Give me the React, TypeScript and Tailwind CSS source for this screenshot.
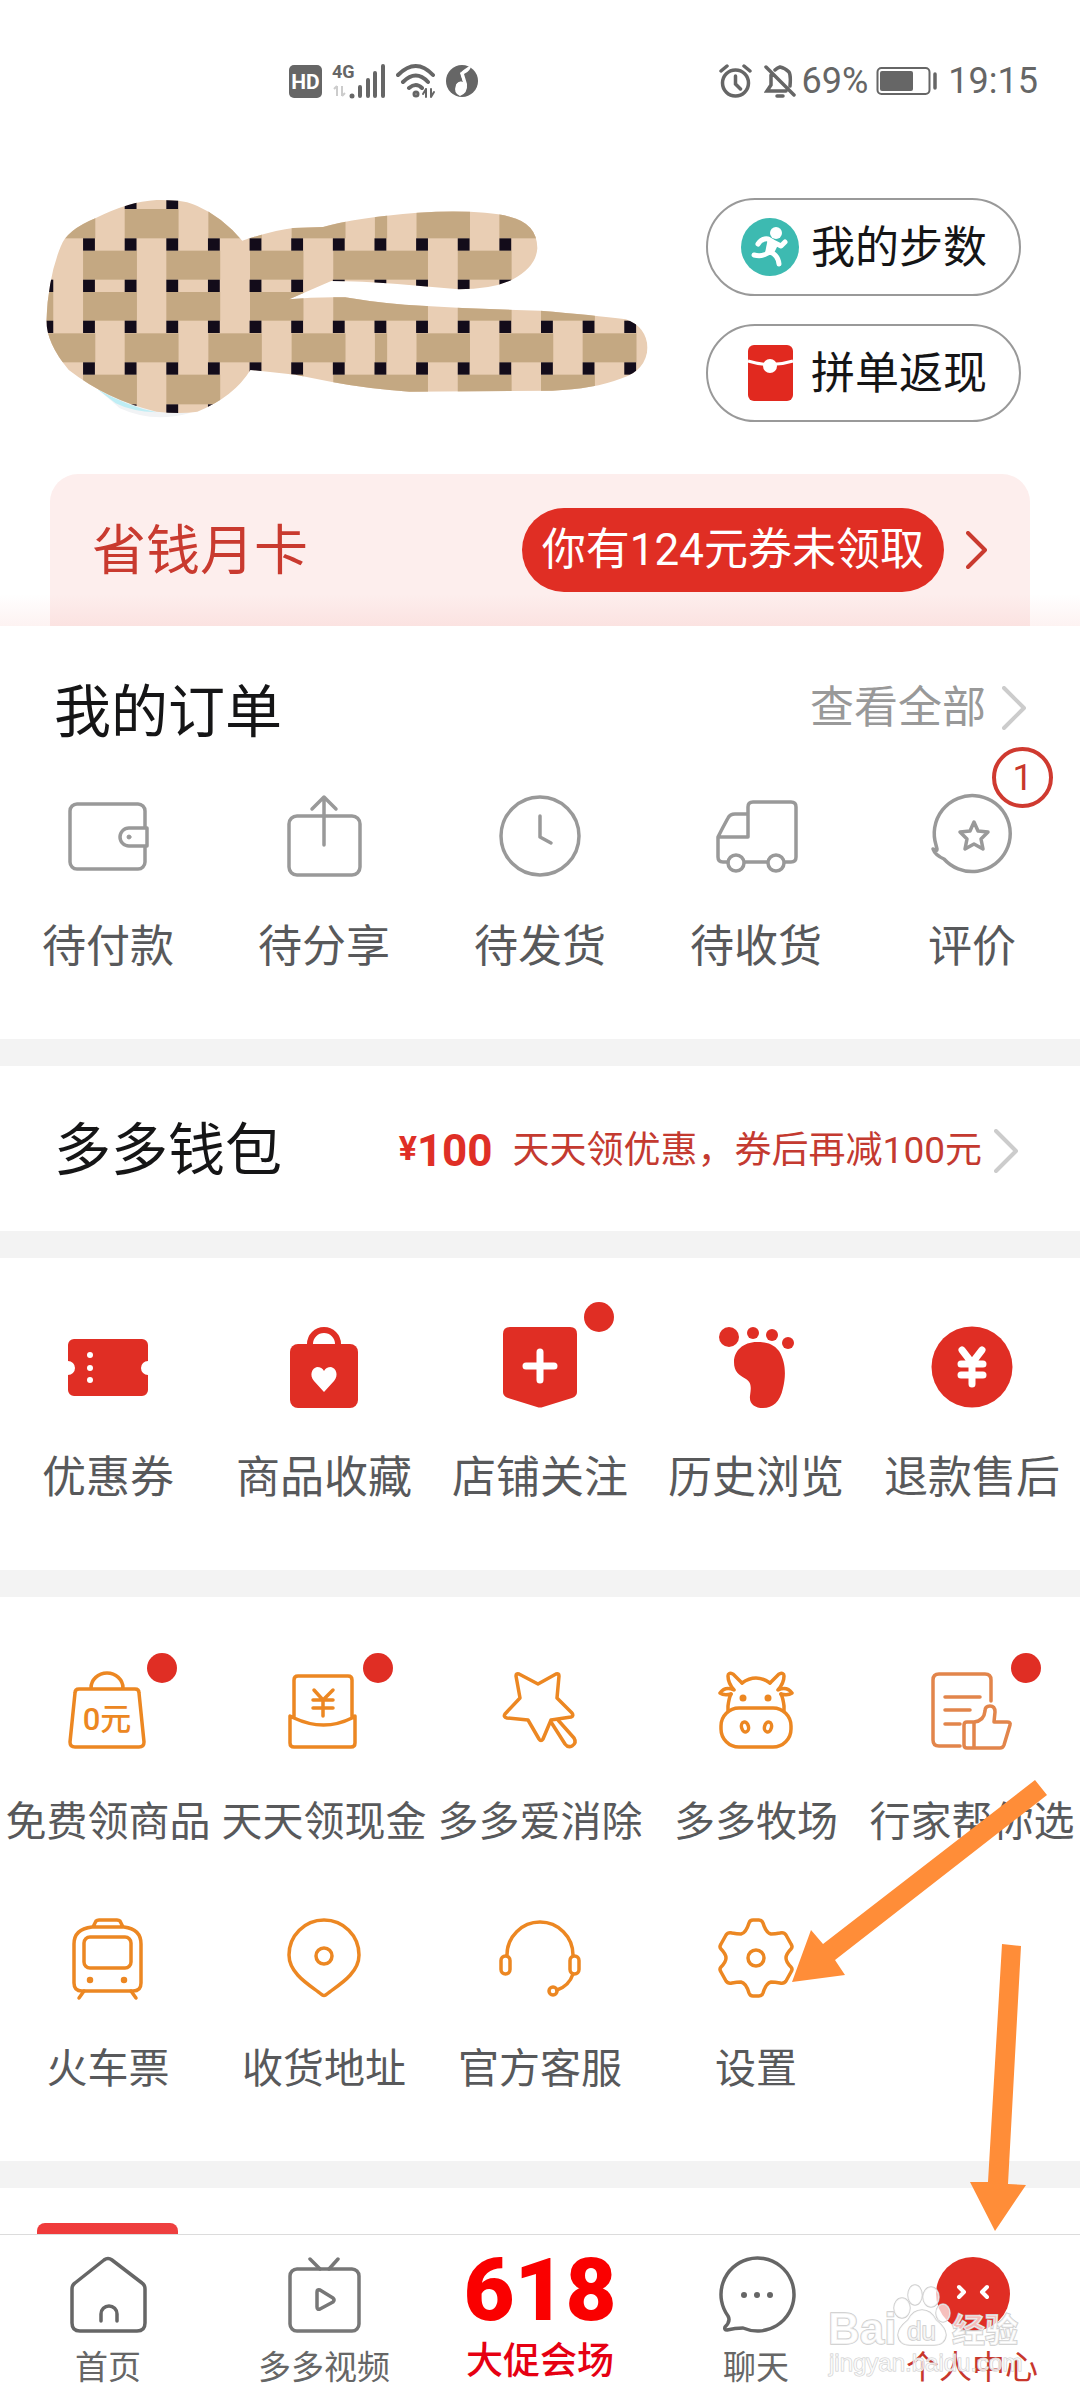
import React from "react";

const FONT = "font-[Roboto,'Noto_Sans_CJK_SC',sans-serif]";

/* ---------- drawing helpers ---------- */

function Icon({ children, color, width = 3.5 }: { children: React.ReactNode; color: string; width?: number }) {
  return (
    <svg
      viewBox="0 0 82 82"
      className="block size-[82px] overflow-visible"
      fill="none"
      stroke={color}
      strokeWidth={width}
      strokeLinecap="round"
      strokeLinejoin="round"
      aria-hidden="true"
    >
      {children}
    </svg>
  );
}

function Chevron({ className, height, strokeWidth = 4 }: { className: string; height: number; strokeWidth?: number }) {
  return (
    <svg width={height / 2 + 4} height={height + 4} viewBox={`-2 -2 ${height / 2 + 4} ${height + 4}`} fill="none" className={className} stroke="currentColor" strokeWidth={strokeWidth} strokeLinecap="round" strokeLinejoin="round" aria-hidden="true">
      <path d={`M0 0L${height / 2} ${height / 2}L0 ${height}`} />
    </svg>
  );
}

const GREY = "#999999";
const RED = "#e02e24";
const ORANGE = "#ec8722";
const NAV = "#666666";

/* ---------- avatar weave ---------- */

const blockX = Array.from({ length: 16 }, (_, i) => 28 + i * 102);
const blockY = [50, 175, 299, 422, 547, 673];
const even = [[130, 262], [334, 466], [539, 670], [743, 975], [1048, 1180], [1252, 1384]];
const odd = [[28, 160], [232, 364], [437, 568], [641, 773], [845, 875], [947, 1078], [1150, 1282], [1354, 1486]];
const bands: [number, number, number[][]][] = [
  [87, 88, odd],
  [212, 87, even],
  [336, 86, [[-70, 57], ...even]],
  [460, 87, odd],
  [584, 89, even],
];

function WovenPatch() {
  return (
    <svg width="640" height="224" viewBox="0 18 640 224" className="block shrink-0" role="img" aria-label="用户头像">
      <g transform="scale(0.40816 0.33333)">
        <clipPath id="patch">
          <path d="M520 182Q600 150 645 144L718 141Q800 112 950 98Q1100 88 1175 110Q1243 130 1243 205Q1240 262 1180 300Q1130 328 1050 328L900 312Q810 303 738 303L635 358Q700 350 772 352Q880 374 960 377Q1100 388 1250 392Q1380 405 1460 418Q1510 440 1513 503Q1510 570 1450 595Q1380 628 1280 632L930 635Q820 625 740 606L650 584L540 570Q500 650 410 695Q370 703 310 695Q190 660 95 570Q40 490 40 420Q45 290 75 200Q90 150 160 115Q240 65 310 60Q380 58 410 78Q470 110 520 182Z" />
        </clipPath>
        <path d="M160 620Q260 690 390 700Q300 730 220 685Z" fill="#f1f3f5" />
        <path d="M165 628Q240 680 310 697Q250 695 210 670Z" fill="#bfeef5" />
        <g clipPath="url(#patch)">
          <rect width="1568" height="750" fill="#e9ceb4" />
          {bands.map(([y, h, spans]) => spans.map(([a, b]) => <rect key={`${y}-${a}`} x={a} y={y} width={b - a} height={h} fill="#c4a882" />))}
          {blockY.map((y) => blockX.map((x) => <rect key={`${x}-${y}`} x={x} y={y} width="29" height="37" fill="#130c1a" />))}
        </g>
      </g>
    </svg>
  );
}

/* ---------- status bar ---------- */

function StatusBar() {
  return (
    <header className="flex h-[105px] items-end justify-between pl-[289px] pr-[42px] text-[#666]">
      <div className="flex h-12 items-center gap-[10px]">
        <svg width="33" height="34" viewBox="0 0 33 34" aria-label="HD">
          <rect width="33" height="33" y="1" rx="5" fill="#666" />
          <text x="16.500" y="25" textAnchor="middle" fontSize="21" fontWeight="700" fill="#fff" className="font-[Roboto]">HD</text>
        </svg>
        <svg width="54" height="36" viewBox="0 0 54 36" fill="#666" aria-label="4G">
          <text x="0" y="15" fontSize="18" fontWeight="700" className="font-[Roboto]">4G</text>
          <path d="M5 23v10M2 26l3-3M10 23v10M10 33l3-3" stroke="#ccc" strokeWidth="2" />
          <circle cx="20" cy="33" r="2.500" />
          <path d="M28 33v-9M36 33V17M43 33V10M51 33V3" stroke="#666" strokeWidth="4" strokeLinecap="round" />
        </svg>
        <svg width="40" height="36" viewBox="0 0 40 36" fill="none" stroke="#666" strokeWidth="4" strokeLinecap="round" aria-hidden="true">
          <path d="M2 12Q20 -6 37 12M7 19Q20 6 32 19M13 25Q20 19 26 25" />
          <circle cx="20" cy="31" r="1.500" />
          <path d="M30 26v8M30 26l-3 5M35 26v8M35 34l3-5" strokeWidth="2" />
        </svg>
        <svg width="32" height="32" viewBox="0 0 32 32" aria-hidden="true">
          <circle cx="16" cy="16" r="16" fill="#666" />
          <path d="M25 0Q25 6 18 9L21 19Q22 28 14 31Q7 28 10 20Q12 16 17 17L14 8Q17 5 25 0Z" fill="#fff" />
          <path d="M14 6L19 19Q20 28 14 30Q9 27 10 20Q13 15 17 17Z" fill="#fff" />
        </svg>
      </div>
      <div className="flex h-12 items-center">
        <svg width="33" height="34" viewBox="0 0 33 34" fill="none" stroke="#666" strokeWidth="3.500" strokeLinecap="round" aria-hidden="true">
          <circle cx="16.500" cy="19" r="13" />
          <path d="M16.500 12v8l5 5M2 7l6-5M31 7l-6-5" />
        </svg>
        <svg width="32" height="34" viewBox="0 0 32 34" fill="none" stroke="#666" strokeWidth="3.500" strokeLinecap="round" className="ml-3" aria-hidden="true">
          <path d="M2 3L30 31M7 11v10l-4 6h19M11 6q2-2 5-3q5 1 9 5q2 3 1 14M13 32h6" />
        </svg>
        <span className="ml-[6px] text-4xl">69%</span>
        <svg width="62" height="30" viewBox="0 0 62 30" className="ml-2" aria-hidden="true">
          <rect x="1.500" y="2" width="52" height="26" rx="4" fill="none" stroke="#666" strokeWidth="2" />
          <rect x="4" y="5" width="33" height="20" rx="2" fill="#666" />
          <path d="M59 8v14" stroke="#666" strokeWidth="3.500" strokeLinecap="round" />
        </svg>
        <span className="ml-[10px] text-4xl">19:15</span>
      </div>
    </header>
  );
}

/* ---------- grid entries ---------- */

type Entry = { label: string; icon: React.ReactNode; dot?: boolean; badge?: string };

function EntryGrid({ items, labelClass, dotClass = "" }: { items: Entry[]; labelClass: string; dotClass?: string }) {
  return (
    <div className="grid grid-cols-5 gap-y-[65px]">
      {items.map((it) => (
        <button key={it.label} type="button" className="flex flex-col items-center">
          <span className="relative block">
            {it.icon}
            {it.dot && <span className={`absolute size-[30px] rounded-full bg-[#e02e24] ${dotClass}`} />}
            {it.badge && (
              <span className="absolute -top-12 left-[61px] flex size-[61px] items-center justify-center rounded-full border-4 border-[#cf3a30] bg-white text-4xl text-[#c8372c]">
                {it.badge}
              </span>
            )}
          </span>
          <span className={`mt-10 whitespace-nowrap leading-[60px] text-[#58595b] ${labelClass}`}>{it.label}</span>
        </button>
      ))}
    </div>
  );
}

const orders: Entry[] = [
  {
    label: "待付款",
    icon: (
      <Icon color={GREY}>
        <rect x="3" y="9" width="75" height="65" rx="7" />
        <path d="M80 33H62a9 9 0 0 0 0 18h18z" fill="#fff" />
        <circle cx="62" cy="42" r="2" fill={GREY} strokeWidth="1" />
      </Icon>
    ),
  },
  {
    label: "待分享",
    icon: (
      <Icon color={GREY}>
        <rect x="6" y="21" width="71" height="59" rx="8" />
        <path d="M41 50V3M29 14L41 2L53 14" />
      </Icon>
    ),
  },
  {
    label: "待发货",
    icon: (
      <Icon color={GREY}>
        <circle cx="41" cy="41" r="39" />
        <path d="M41 21V42L52 48" />
      </Icon>
    ),
  },
  {
    label: "待收货",
    icon: (
      <Icon color={GREY}>
        <path d="M13 67H8Q3 67 3 62V42Q8 32 13 23Q15 19 20 19H33M3 42H33V12Q33 7 38 7H76Q81 7 81 12V62Q81 67 76 67H70M30 67H52" />
        <circle cx="21" cy="68" r="8" />
        <circle cx="61" cy="68" r="8" />
      </Icon>
    ),
  },
  {
    label: "评价",
    badge: "1",
    icon: (
      <Icon color={GREY}>
        <path d="M5 50A38 38 0 1 1 13 64Q4 60 2 54Q6 57 6 54Z" />
        <path d="M43 27L47 36L57 37L50 44L52 54L43 49L34 54L36 44L29 37L39 36Z" />
      </Icon>
    ),
  },
];

const services: Entry[] = [
  {
    label: "优惠券",
    icon: (
      <Icon color="none">
        <path fill={RED} d="M7 13H75a6 6 0 0 1 6 6V35a7 7 0 0 0 0 14V64a6 6 0 0 1-6 6H7a6 6 0 0 1-6-6V49a7 7 0 0 0 0-14V19a6 6 0 0 1 6-6z" />
        <g fill="#fff">
          <circle cx="23" cy="29" r="3" />
          <circle cx="23" cy="42" r="3" />
          <circle cx="23" cy="54" r="3" />
        </g>
      </Icon>
    ),
  },
  {
    label: "商品收藏",
    icon: (
      <Icon color="none">
        <rect x="7" y="18" width="68" height="64" rx="8" fill={RED} />
        <path d="M27 20V18a14 14 0 0 1 28 0v2" stroke={RED} strokeWidth="6" />
        <path d="M41 66L31 55C26 49 29 42 34 41Q39 41 41 45Q43 41 48 41C53 42 56 49 51 55Z" fill="#fff" />
      </Icon>
    ),
  },
  {
    label: "店铺关注",
    dot: true,
    icon: (
      <Icon color="none">
        <path d="M11 1H71Q78 1 78 8V66Q78 70 73 72L44 81Q41 82 38 81L9 72Q4 70 4 66V8Q4 1 11 1Z" fill={RED} />
        <path d="M41 26V54M27 40H55" stroke="#fff" strokeWidth="7" />
      </Icon>
    ),
  },
  {
    label: "历史浏览",
    icon: (
      <Icon color="none">
        <g fill={RED}>
          <circle cx="14" cy="11" r="10" />
          <circle cx="38" cy="7" r="6" />
          <circle cx="57" cy="9" r="6" />
          <circle cx="73" cy="17" r="6" />
          <path d="M42 16C28 16 19 25 19 36C19 46 24 49 31 53C37 57 36 62 35 70C34 78 40 82 48 82C58 82 65 76 68 62C71 50 71 36 64 25C58 17 50 16 42 16Z" />
        </g>
      </Icon>
    ),
  },
  {
    label: "退款售后",
    icon: (
      <Icon color="none">
        <circle cx="41" cy="41" r="40.500" fill={RED} />
        <path d="M31 24L41 37L51 24M41 37V58M30 38H52M30 49H52" stroke="#fff" strokeWidth="7" />
      </Icon>
    ),
  },
];

const tools: Entry[] = [
  {
    label: "免费领商品",
    dot: true,
    icon: (
      <Icon color={ORANGE}>
        <path d="M12 19H68Q72 19 72 23L77 72Q77 77 72 77H8Q3 77 3 72L8 23Q8 19 12 19ZM24 19V18a16 15 0 0 1 32 0v1" />
        <text x="40" y="60" textAnchor="middle" fontSize="31" fontWeight="500" fill={ORANGE} strokeWidth="0">0元</text>
      </Icon>
    ),
  },
  {
    label: "天天领现金",
    dot: true,
    icon: (
      <Icon color={ORANGE}>
        <path d="M11 48V10Q11 6 15 6H65Q69 6 69 10V48M7 46V73Q7 77 11 77H68Q72 77 72 73V46L69 48Q41 62 11 48Z" />
        <path d="M31 20L40 30L50 20M40 30V46M30 30H50M30 38H50" />
      </Icon>
    ),
  },
  {
    label: "多多爱消除",
    icon: (
      <Icon color={ORANGE}>
        <path d="M20 4L39 14L57 4Q60 3 60 6L58 28L73 43Q75 46 72 47L52 50L44 69Q42 72 40 69L29 50L8 48Q4 47 6 44L21 28L17 6Q17 3 20 4Z" />
        <path d="M52 52L66 74Q69 78 73 76Q78 73 75 68L59 50" />
      </Icon>
    ),
  },
  {
    label: "多多牧场",
    icon: (
      <Icon color={ORANGE}>
        <rect x="6" y="38" width="70" height="39" rx="18" />
        <path d="M13 41V36Q14 28 16 24M69 41V36Q68 28 66 24M27 13Q41 3 55 13" />
        <path d="M27 13L18 4Q13 2 13 6Q13 13 19 20Q10 16 5 23Q9 26 16 24M55 13L64 4Q69 2 69 6Q69 13 63 20Q72 16 77 23Q73 26 66 24" />
        <circle cx="28" cy="28" r="2.500" fill={ORANGE} strokeWidth="2" />
        <circle cx="53" cy="28" r="2.500" fill={ORANGE} strokeWidth="2" />
        <ellipse cx="30" cy="57" rx="3.500" ry="5" transform="rotate(-15 30 57)" />
        <ellipse cx="53" cy="57" rx="3.500" ry="5" transform="rotate(15 53 57)" />
      </Icon>
    ),
  },
  {
    label: "行家帮你选",
    dot: true,
    icon: (
      <Icon color="#e2854b">
        <path d="M60 31V10Q60 4 54 4H8Q2 4 2 10V70Q2 76 8 76H29M14 27H49M14 40H39M14 54H29" />
        <path d="M43 52H36Q33 52 33 55V75Q33 78 36 78H69Q72 78 73 75L79 55Q80 52 76 52H63L64 42Q64 36 59 36Q54 36 54 41Q53 51 43 52V78" />
      </Icon>
    ),
  },
  {
    label: "火车票",
    icon: (
      <Icon color={ORANGE}>
        <path d="M25 10H57Q74 12 74 27V66Q74 74 66 74H15Q7 74 7 66V27Q7 12 25 10ZM26 10L29 4Q30 3 32 3H50Q52 3 53 4L56 10" />
        <rect x="17" y="20" width="47" height="31" rx="6" />
        <path d="M17 74L12 81M64 74L69 81" />
        <circle cx="23" cy="63" r="1.500" fill={ORANGE} />
        <circle cx="57" cy="63" r="1.500" fill={ORANGE} />
      </Icon>
    ),
  },
  {
    label: "收货地址",
    icon: (
      <Icon color={ORANGE}>
        <path d="M38 77C30 70 6 58 6 38A35 35 0 0 1 76 38C76 58 52 70 44 77Q41 80 38 77Z" />
        <circle cx="41" cy="39" r="8" />
      </Icon>
    ),
  },
  {
    label: "官方客服",
    icon: (
      <Icon color={ORANGE}>
        <path d="M8 38A33 33 0 0 1 74 38M74 57Q70 69 58 73" />
        <rect x="2" y="39" width="9" height="18" rx="4.500" />
        <rect x="71" y="39" width="9" height="18" rx="4.500" />
        <circle cx="54" cy="74" r="4" />
      </Icon>
    ),
  },
  {
    label: "设置",
    icon: (
      <Icon color={ORANGE}>
        <path d="M34 6Q35 3 38 3H44Q47 3 48 6Q51 16 56 17Q60 17 65 16Q69 15 71 18L76 27Q78 30 76 32Q71 37 71 41Q71 45 76 50Q78 52 76 55L71 64Q69 67 65 66Q60 65 56 65Q51 66 48 76Q47 79 44 79H38Q35 79 34 76Q31 66 26 65Q22 65 17 66Q13 67 11 64L6 55Q4 52 6 50Q11 45 11 41Q11 37 6 32Q4 30 6 27L11 18Q13 15 17 16Q22 17 26 17Q31 16 34 6Z" />
        <circle cx="41" cy="41" r="8" />
      </Icon>
    ),
  },
];

/* ---------- bottom navigation ---------- */

function NavItem({ label, children, active = false }: { label: string; children: React.ReactNode; active?: boolean }) {
  return (
    <a href="#" className={`flex flex-col items-center ${active ? "text-[#c8372c]" : "text-[#666]"}`} aria-current={active ? "page" : undefined}>
      {children}
      <span className="mt-3 whitespace-nowrap text-[33px] leading-10">{label}</span>
    </a>
  );
}

function Watermark() {
  return (
    <svg width="204" height="105" viewBox="820 2280 204 105" className="pointer-events-none absolute bottom-[15px] right-14" aria-hidden="true">
      <g fill="#fff" fillOpacity="0.700" stroke="#cccccc" strokeWidth="1.500" paintOrder="stroke">
        <text x="828" y="2344" fontSize="44" fontWeight="700" className="font-['Liberation_Sans']">Bai</text>
        <ellipse cx="902" cy="2308" rx="8" ry="10" />
        <ellipse cx="915" cy="2295" rx="7" ry="10" />
        <ellipse cx="931" cy="2297" rx="8" ry="10" />
        <ellipse cx="943" cy="2313" rx="7" ry="9" />
        <path d="M922 2310Q931 2310 936 2320Q946 2328 946 2335Q945 2345 934 2345H910Q899 2345 898 2335Q898 2328 908 2320Q913 2310 922 2310Z" />
        <text x="907" y="2340" fontSize="26" className="font-['Liberation_Sans']">du</text>
        <text x="952" y="2342" fontSize="33" fontWeight="700">经验</text>
        <text x="829" y="2371" fontSize="24" strokeWidth="1" className="font-['Liberation_Sans']">jingyan.baidu.com</text>
      </g>
    </svg>
  );
}

function BottomNav() {
  return (
    <nav className="relative grid grid-cols-5 border-t border-[#dcdcdc] bg-white pb-3 pt-[19px]">
      <NavItem label="首页">
        <Icon color={NAV}>
          <path d="M5 35Q5 31 8 29L37 6Q41 3 45 6L75 29Q78 31 78 35V69Q78 77 70 77H13Q5 77 5 69Z" />
          <path d="M34 67V60a8 8 0 0 1 16 0V67" />
        </Icon>
      </NavItem>
      <NavItem label="多多视频">
        <Icon color="#777777">
          <rect x="7" y="15" width="69" height="62" rx="7" />
          <path d="M27 5L37 15M55 5L46 15M34 38Q34 35 37 36L50 44Q52 46 50 48L37 55Q34 56 34 53Z" />
        </Icon>
      </NavItem>
      <a href="#" className="flex flex-col items-center text-[#e60012]">
        <span className="text-[88px] font-black leading-[72px] text-[#fa0000]">618</span>
        <span className="mt-4 whitespace-nowrap text-[37px] font-medium leading-10">大促会场</span>
      </a>
      <NavItem label="聊天">
        <Icon color={NAV}>
          <path d="M28 74A36.500 36.500 0 1 0 13 62Q16 67 10 73Q9 76 12 76Q20 74 28 74Z" />
          <g fill={NAV} stroke="none">
            <circle cx="29" cy="41" r="3" />
            <circle cx="42" cy="41" r="3" />
            <circle cx="55" cy="41" r="3" />
          </g>
        </Icon>
      </NavItem>
      <NavItem label="个人中心" active>
        <Icon color="#fff" width={4}>
          <circle cx="42" cy="40" r="37" fill={RED} stroke="none" />
          <path d="M28 33L33 38L28 43M56 33L51 38L56 43" />
        </Icon>
      </NavItem>
      <Watermark />
    </nav>
  );
}

/* ---------- page ---------- */

function Divider() {
  return <div className="h-[27px] bg-[#f3f3f3]" />;
}

export default function App() {
  return (
    <div className={`relative w-full overflow-hidden bg-white text-[#151516] ${FONT}`} lang="zh-CN">
      <StatusBar />

      <section className="flex items-start justify-between pl-[30px] pr-[59px] pt-[93px]">
        <WovenPatch />
        <div className="flex w-[315px] shrink-0 flex-col gap-7">
          <button type="button" className="flex h-[98px] items-center rounded-full border-2 border-[#999] pl-[33px]">
            <svg width="58" height="58" viewBox="0 0 58 58" aria-hidden="true">
              <circle cx="29" cy="29" r="29" fill="#3dbab1" />
              <circle cx="35" cy="15" r="6" fill="#fff" />
              <path d="M17 26Q21 20 27 21L32 24L40 28L44 24M31 24L27 35Q21 39 13 37M29 34Q37 37 38 46" fill="none" stroke="#fff" strokeWidth="5" strokeLinecap="round" strokeLinejoin="round" />
              <path d="M27 20L37 27L32 37L24 35Z" fill="#fff" />
            </svg>
            <span className="ml-3 pt-0.5 text-[44px] leading-[60px]">我的步数</span>
          </button>
          <button type="button" className="flex h-[98px] items-center rounded-full border-2 border-[#999] pl-[33px]">
            <svg width="58" height="58" viewBox="0 0 58 58" aria-hidden="true">
              <rect x="7" y="1" width="45" height="56" rx="6" fill="#e1291f" />
              <path d="M7 17Q30 24 52 17" fill="none" stroke="#fff" strokeWidth="3" />
              <circle cx="29" cy="22" r="7" fill="#fff" />
            </svg>
            <span className="ml-3 pt-0.5 text-[44px] leading-[60px]">拼单返现</span>
          </button>
        </div>
      </section>

      <section className="relative px-[50px] pt-[52px]">
        <div className="flex h-[152px] items-start justify-between rounded-t-[28px] bg-[#fdeeed] pl-[42px] pr-[43px] pt-[34px]">
          <h2 className="text-[54px] leading-[87px] text-[#c93a2f]">省钱月卡</h2>
          <button type="button" className="flex items-center text-[#c93a2f]">
            <span className="rounded-full bg-[#e02e24] px-5 text-[44px] leading-[84px] text-white">你有124元券未领取</span>
            <Chevron height={34} className="ml-[22px]" />
          </button>
        </div>
        <div className="absolute inset-x-0 bottom-0 h-8 bg-linear-to-b from-transparent to-[#e02e24]/6" />
      </section>

      <section className="pb-[62px] pt-[50px]">
        <div className="mb-[46px] flex items-start justify-between pl-[54px] pr-[54px]">
          <h2 className="text-[57px] leading-[73px]">我的订单</h2>
          <button type="button" className="mt-0.5 flex items-center text-[44px] leading-[60px] text-[#999]">
            查看全部
            <Chevron height={40} className="ml-4 text-[#ccc]" />
          </button>
        </div>
        <EntryGrid items={orders} labelClass="text-[44px]" />
      </section>

      <Divider />
      <section className="flex items-center justify-between pb-11 pl-[54px] pr-[62px] pt-12">
        <h2 className="text-[57px] leading-[73px]">多多钱包</h2>
        <button type="button" className="flex items-center text-[#c43a30]">
          <span className="self-start text-[34px] font-bold text-[#df2f26]">¥</span>
          <span className="text-[44px] font-bold leading-[56px] text-[#df2f26]">100</span>
          <span className="ml-5 text-[37px]">天天领优惠，券后再减100元</span>
          <Chevron height={40} className="ml-3 text-[#ccc]" />
        </button>
      </section>

      <Divider />
      <section className="pb-[62px] pt-[68px]">
        <EntryGrid items={services} labelClass="text-[44px]" dotClass="-top-6 left-[85px]" />
      </section>

      <Divider />
      <section className="pb-[62px] pt-[73px]">
        <EntryGrid items={tools} labelClass="text-[41px]" dotClass="-top-[17px] left-20" />
      </section>

      <Divider />
      <div className="px-[37px] pt-[35px]">
        <div className="h-[11px] w-[141px] rounded-t-lg bg-linear-to-r from-[#f03a3a] to-[#ee4040]" />
      </div>
      <BottomNav />

      <svg width="280" height="470" viewBox="780 1770 280 470" className="pointer-events-none absolute bottom-40 right-5" fill="#ff8d38" aria-hidden="true">
        <path d="M1035 1780L1047 1795L835 1960L845 1975L792 1982L811 1930L823 1944Z" />
        <path d="M1002 1944L1021 1946L1008 2184L1026 2185L995 2231L970 2182L988 2182Z" />
      </svg>
    </div>
  );
}
